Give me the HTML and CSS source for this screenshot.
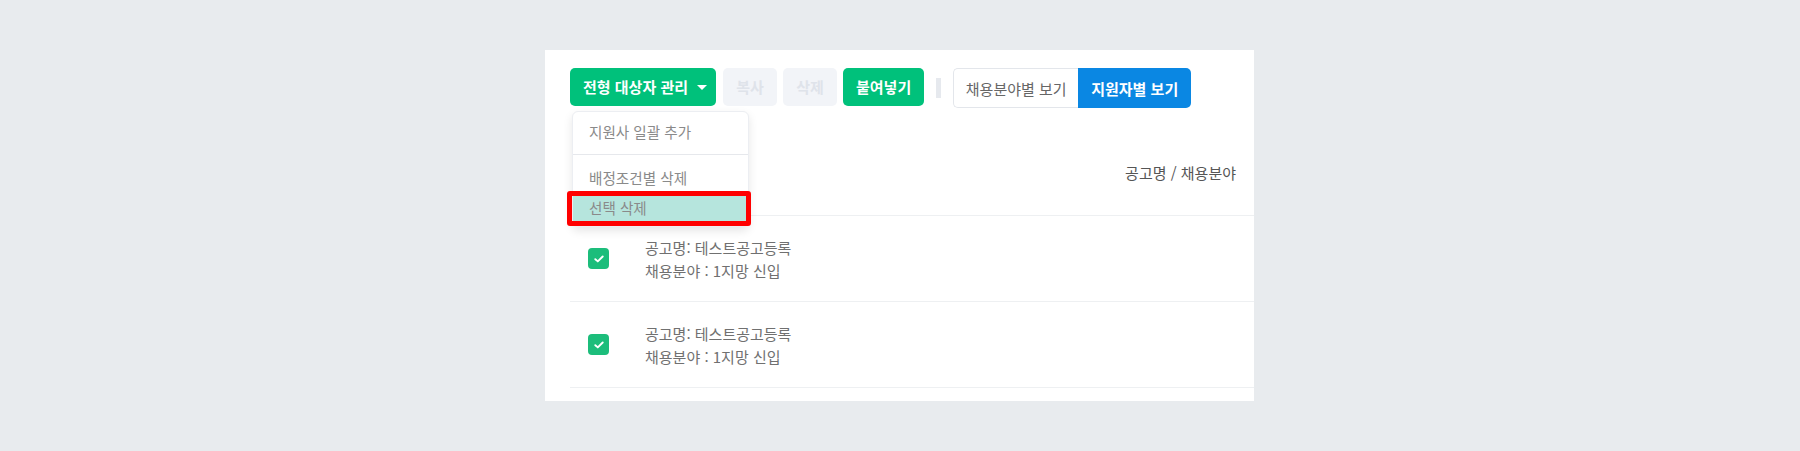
FILE: index.html
```html
<!DOCTYPE html>
<html lang="ko">
<head>
<meta charset="utf-8">
<title>전형 대상자 관리</title>
<link rel="stylesheet" href="styles.css">
</head>
<body>
<div class="panel">
  <div class="toolbar">
    <div class="menu-wrap">
      <button class="btn btn-green btn-menu">전형 대상자 관리 <span class="caret"></span></button>
      <div class="dropdown">
        <div class="dd-item">지원사 일괄 추가</div>
        <div class="dd-divider"></div>
        <div class="dd-item">배정조건별 삭제</div>
        <div class="dd-item dd-active">선택 삭제</div>
      </div>
    </div>
    <button class="btn btn-disabled">복사</button>
    <button class="btn btn-disabled">삭제</button>
    <button class="btn btn-green">붙여넣기</button>
    <span class="sep"></span>
    <div class="segment">
      <button class="seg seg-off">채용분야별 보기</button>
      <button class="seg seg-on">지원자별 보기</button>
    </div>
  </div>
  <div class="table">
    <div class="thead">공고명 / 채용분야</div>
    <div class="row">
      <span class="check"><svg width="10" height="8" viewBox="0 0 10 8"><path d="M1.3 4.2 L3.8 6.4 L8.7 1.5" fill="none" stroke="#fff" stroke-width="1.9" stroke-linecap="round" stroke-linejoin="round"/></svg></span>
      <div class="cell">
        <div>공고명: 테스트공고등록</div>
        <div>채용분야 : 1지망 신입</div>
      </div>
    </div>
    <div class="row">
      <span class="check"><svg width="10" height="8" viewBox="0 0 10 8"><path d="M1.3 4.2 L3.8 6.4 L8.7 1.5" fill="none" stroke="#fff" stroke-width="1.9" stroke-linecap="round" stroke-linejoin="round"/></svg></span>
      <div class="cell">
        <div>공고명: 테스트공고등록</div>
        <div>채용분야 : 1지망 신입</div>
      </div>
    </div>
  </div>
</div>
<div class="annot"></div>
</body>
</html>
```

FILE: styles.css
```css
* { box-sizing: border-box; }
html, body { margin: 0; padding: 0; }
body {
  background: #e8ebee;
  font-family: "Noto Sans CJK KR", "Noto Sans", sans-serif;
  height: 451px;
  position: relative;
}
.panel {
  position: absolute;
  left: 545px;
  top: 50px;
  width: 709px;
  height: 351px;
  background: #fff;
  padding: 18px 0 0 25px;
}
.toolbar {
  display: flex;
  align-items: flex-start;
  gap: 6px;
  height: 40px;
}
.menu-wrap { position: relative; margin-right: 1px; }
.btn {
  height: 38px;
  border: 0;
  border-radius: 5px;
  font-family: inherit;
  font-size: 15px;
  font-weight: 700;
  padding: 0 13px;
  line-height: 38px;
  white-space: nowrap;
}
.btn-green { background: #00c17b; color: #fff; }
.btn-menu { width: 146px; padding: 0 10px 0 13px; display: flex; align-items: center; }
.caret {
  display: inline-block;
  width: 0; height: 0;
  border-left: 5px solid transparent;
  border-right: 5px solid transparent;
  border-top: 5px solid #fff;
  margin-left: 9px;
}
.btn-disabled { background: #f2f4f8; color: #dfe3ea; width: 54px; padding: 0; }
.sep {
  width: 5px;
  height: 20px;
  background: #e6e9ee;
  margin: 10px 6px 0;
}
.segment { display: flex; height: 40px; }
.seg {
  height: 40px;
  font-family: inherit;
  font-size: 15px;
  padding: 0;
  white-space: nowrap;
}
.seg-off {
  background: #fff;
  border: 1px solid #e3e6eb;
  border-right: 0;
  border-radius: 5px 0 0 5px;
  color: #666;
  width: 125px;
}
.seg-on {
  background: #0a87e3;
  border: 0;
  border-radius: 0 5px 5px 0;
  color: #fff;
  font-weight: 700;
  width: 113px;
}
.dropdown {
  position: absolute;
  left: 2px;
  top: 43px;
  width: 177px;
  background: #fff;
  border: 1px solid #eceef2;
  border-radius: 6px;
  box-shadow: 0 4px 10px rgba(0,0,0,0.10);
  padding: 5px 0 3px;
  z-index: 5;
}
.dd-item {
  height: 30px;
  line-height: 30px;
  padding-left: 16px;
  font-size: 14.6px;
  color: #8a8a8a;
}
.dd-divider { height: 1px; background: #e6e8ec; margin: 7px 0 8px; }
.dd-active { background: #b6e5dd; }
.thead {
  height: 108px;
  padding: 54px 18px 0 0;
  text-align: right;
  font-size: 15px;
  line-height: 22px;
  color: #555;
  border-bottom: 1px solid #eef0f2;
}
.row {
  height: 86px;
  display: flex;
  align-items: center;
  border-bottom: 1px solid #eef0f2;
  padding-left: 18px;
}
.check {
  width: 21px;
  height: 21px;
  border-radius: 4px;
  background: #1cbd7b;
  display: flex;
  align-items: center;
  justify-content: center;
  margin-right: 36px;
}
.cell {
  font-size: 15px;
  line-height: 23px;
  color: #707070;
}
.annot {
  position: absolute;
  left: 567px;
  top: 191px;
  width: 184px;
  height: 35px;
  border: 5px solid #ff0000;
  border-radius: 3px;
  z-index: 10;
}
```
